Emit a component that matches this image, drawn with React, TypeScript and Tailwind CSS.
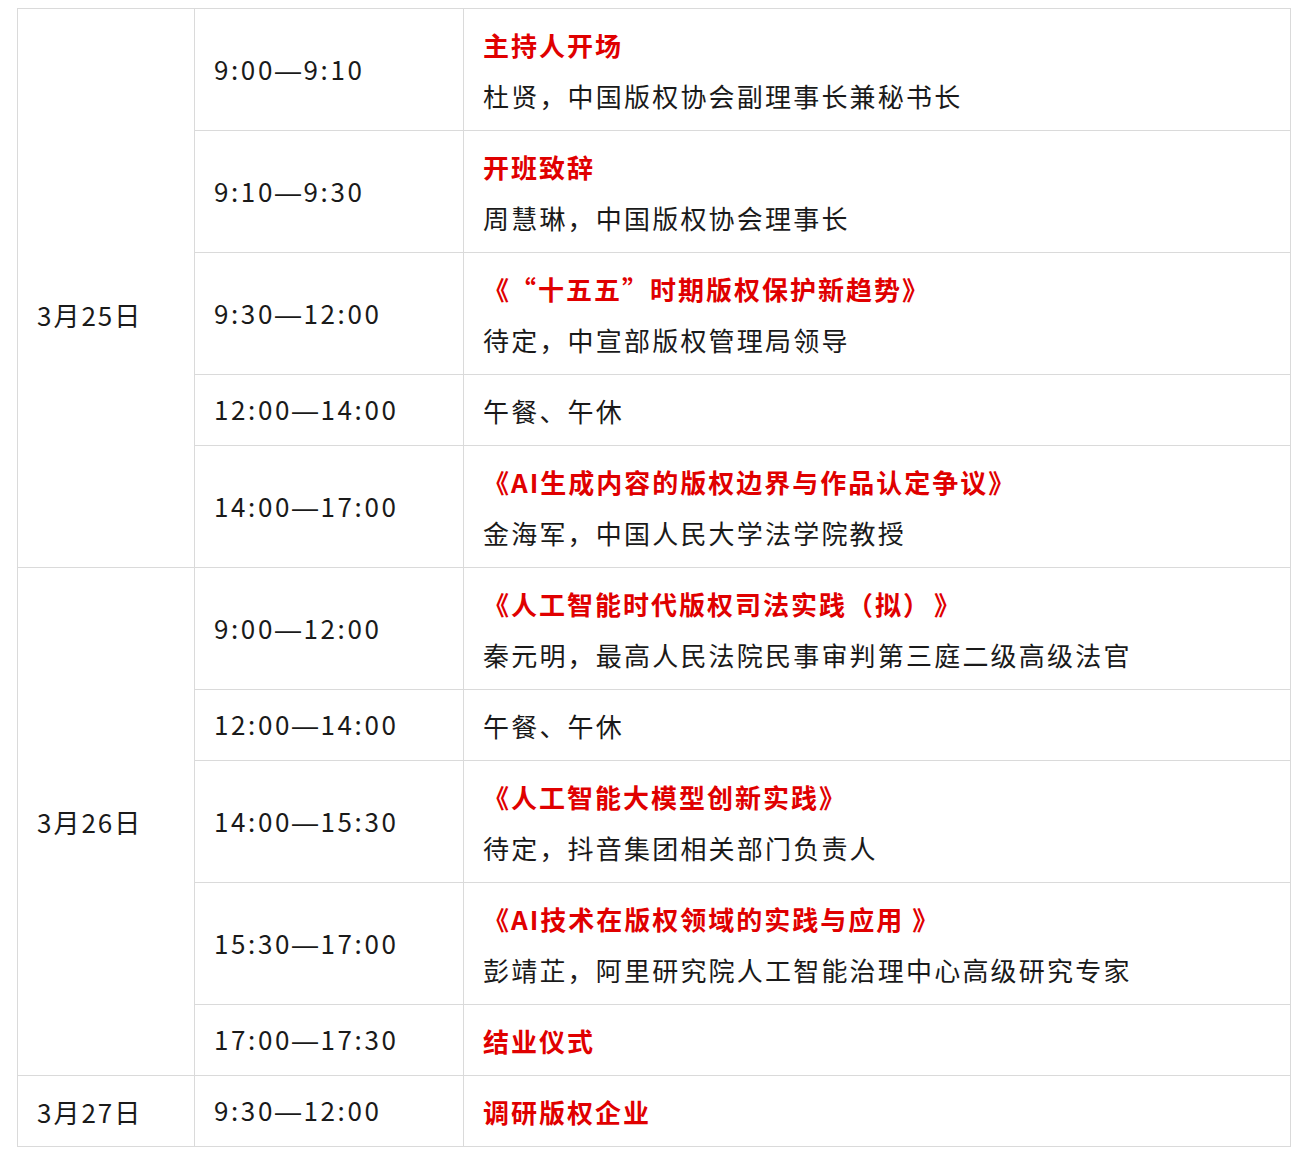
import React from "react";

type Row = { time: string; title?: string; sub?: string; plain?: string };

const day1: Row[] = [
  { time: "9:00—9:10", title: "主持人开场", sub: "杜贤，中国版权协会副理事长兼秘书长" },
  { time: "9:10—9:30", title: "开班致辞", sub: "周慧琳，中国版权协会理事长" },
  { time: "9:30—12:00", title: "《“十五五”时期版权保护新趋势》", sub: "待定，中宣部版权管理局领导" },
  { time: "12:00—14:00", plain: "午餐、午休" },
  { time: "14:00—17:00", title: "《AI生成内容的版权边界与作品认定争议》", sub: "金海军，中国人民大学法学院教授" },
];
const day2: Row[] = [
  { time: "9:00—12:00", title: "《人工智能时代版权司法实践（拟）》", sub: "秦元明，最高人民法院民事审判第三庭二级高级法官" },
  { time: "12:00—14:00", plain: "午餐、午休" },
  { time: "14:00—15:30", title: "《人工智能大模型创新实践》", sub: "待定，抖音集团相关部门负责人" },
  { time: "15:30—17:00", title: "《AI技术在版权领域的实践与应用 》", sub: "彭靖芷，阿里研究院人工智能治理中心高级研究专家" },
  { time: "17:00—17:30", title: "结业仪式" },
];
const day3: Row[] = [{ time: "9:30—12:00", title: "调研版权企业" }];

const cell = "border border-[#dadada] px-[19px] align-middle";

function T({ s }: { s: string }) {
  const parts: React.ReactNode[] = [];
  let buf = "";
  let k = 0;
  let prev = "";
  const flush = () => {
    if (buf) parts.push(<React.Fragment key={k++}>{buf}</React.Fragment>);
    buf = "";
  };
  for (const ch of s) {
    if (ch === "—") {
      flush();
      parts.push(
        <span key={k++} style={{ fontFamily: '"Liberation Sans", sans-serif' }}>
          —
        </span>
      );
    } else if (ch === "“") {
      flush();
      parts.push(
        <span key={k++} className="ml-[12px]">
          “
        </span>
      );
    } else if (ch === "》" && prev === "）") {
      flush();
      parts.push(
        <span key={k++} className="ml-[16px]">
          》
        </span>
      );
    } else buf += ch;
    prev = ch;
  }
  flush();
  return <>{parts}</>;
}

function Content({ r }: { r: Row }) {
  return (
    <td className={cell}>
      {r.title && (
        <div className="text-[#e00000] font-bold tracking-[2px]">
          <T s={r.title} />
        </div>
      )}
      {r.sub && <div>{r.sub}</div>}
      {r.plain && <div>{r.plain}</div>}
    </td>
  );
}

function Day({ date, rows, extra }: { date: string; rows: Row[]; extra?: string }) {
  return (
    <>
      {rows.map((r, i) => {
        const two = !!(r.title && r.sub);
        return (
          <tr key={i} className={two ? "h-[122px]" : "h-[71px]"}>
            {i === 0 && (
              <td rowSpan={rows.length} className={cell + " tracking-[2px] " + (extra ?? "")}>
                {date}
              </td>
            )}
            <td className={cell + " tracking-[2.6px]"}>
              <T s={r.time} />
            </td>
            <Content r={r} />
          </tr>
        );
      })}
    </>
  );
}

export default function App() {
  return (
    <div
      className="bg-white w-[1308px] h-[1170px] pt-[8px] pl-[17px] text-[#1a1a1a] text-[26px] leading-[51px] tracking-[2.2px]"
      style={{ fontFamily: '"Noto Sans CJK SC", "Noto Sans", sans-serif' }}
    >
      <table className="border-collapse w-[1274px] table-fixed">
        <colgroup>
          <col className="w-[177px]" />
          <col className="w-[269px]" />
          <col />
        </colgroup>
        <tbody>
          <Day date="3月25日" rows={day1} extra="pt-[52px]" />
          <Day date="3月26日" rows={day2} />
          <Day date="3月27日" rows={day3} />
        </tbody>
      </table>
    </div>
  );
}
